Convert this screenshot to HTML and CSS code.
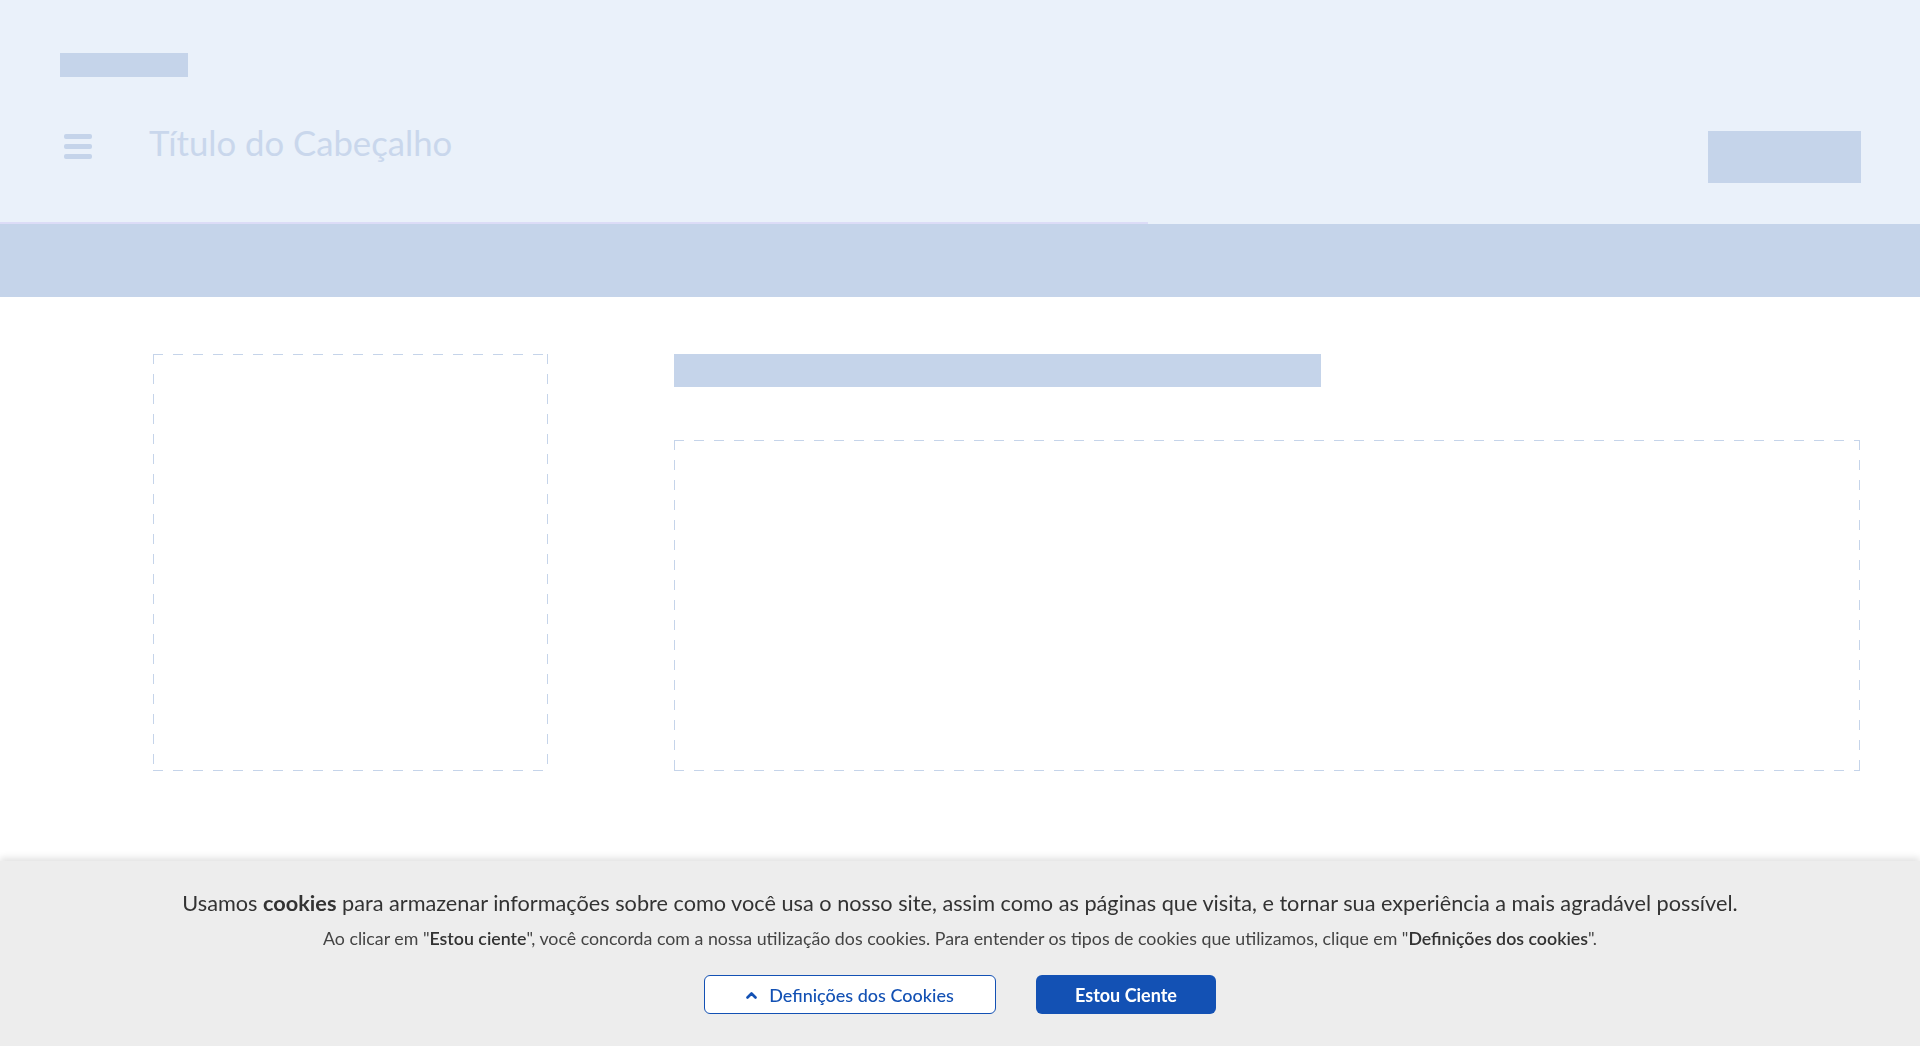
FILE: index.html
```html
<!DOCTYPE html>
<html lang="pt-BR">
<head>
<meta charset="utf-8">
<title>Título do Cabeçalho</title>
<link rel="stylesheet" href="styles.css">
</head>
<body>
<header class="header">
  <div class="header-inner">
    <div class="logo-ph"></div>
    <div class="header-row">
      <div class="burger"><span></span><span></span><span></span></div>
      <h1 class="header-title">Título do Cabeçalho</h1>
      <div class="header-action-ph"></div>
    </div>
  </div>
  <div class="header-progress"></div>
</header>
<div class="band"></div>
<main class="main">
  <div class="dash-box side-box"></div>
  <div class="content-col">
    <div class="title-ph"></div>
    <div class="dash-box content-box"></div>
  </div>
</main>
<div class="cookie-bar">
  <p class="cookie-main">Usamos <strong>cookies</strong> para armazenar informações sobre como você usa o nosso site, assim como as páginas que visita, e tornar sua experiência a mais agradável possível.</p>
  <p class="cookie-sub">Ao clicar em "<b>Estou ciente</b>", você concorda com a nossa utilização dos cookies. Para entender os tipos de cookies que utilizamos, clique em "<b>Definições dos cookies</b>".</p>
  <div class="cookie-actions">
    <button class="btn btn-outline"><svg class="caret" width="11" height="8" viewBox="0 0 11 8"><path d="M1.5 6.5 L5.5 2.5 L9.5 6.5" fill="none" stroke="#1351b4" stroke-width="2.6" stroke-linecap="round" stroke-linejoin="round"/></svg>Definições dos Cookies</button>
    <button class="btn btn-primary">Estou Ciente</button>
  </div>
</div>
</body>
</html>
```
FILE: styles.css
```css
html, body {
  margin: 0;
  padding: 0;
}
body {
  width: 1920px;
  height: 1046px;
  overflow: hidden;
  background: #ffffff;
  font-family: Lato, "Noto Sans", sans-serif;
}
.header {
  background: #eaf1fa;
  height: 224px;
  display: flex;
  flex-direction: column;
}
.header-inner {
  flex: 1;
  padding: 53px 59px 0 60px;
}
.logo-ph {
  width: 128px;
  height: 24px;
  background: #c5d4ea;
}
.header-row {
  display: flex;
  align-items: flex-start;
  margin-top: 54px;
}
.burger {
  width: 28px;
  margin: 3px 0 0 4px;
  display: flex;
  flex-direction: column;
  gap: 5px;
}
.burger span {
  display: block;
  height: 5px;
  border-radius: 2px;
  background: #c5d4ea;
}
.header-title {
  margin: -8px 0 0 57px;
  font-family: Lato, "Noto Sans", sans-serif;
  font-weight: 400;
  font-size: 34.7px;
  line-height: 40px;
  color: #c9d7ec;
  letter-spacing: 0;
}
.header-action-ph {
  margin-left: auto;
  width: 153px;
  height: 52px;
  background: #c5d4ea;
}
.header-progress {
  width: 1148px;
  height: 2px;
  background: #dcdcf7;
}
.band {
  height: 73px;
  background: #c5d4ea;
}
.main {
  display: flex;
  align-items: flex-start;
  padding: 57px 0 0 153px;
}
.dash-box {
  box-sizing: border-box;
  background-image:
    repeating-linear-gradient(90deg, #c5d4ea 0 10px, transparent 10px 20px),
    repeating-linear-gradient(90deg, #c5d4ea 0 10px, transparent 10px 20px),
    repeating-linear-gradient(180deg, #c5d4ea 0 10px, transparent 10px 20px),
    repeating-linear-gradient(180deg, #c5d4ea 0 10px, transparent 10px 20px);
  background-size: 100% 1px, 100% 1px, 1px 100%, 1px 100%;
  background-position: left top, left bottom, left top, right top;
  background-repeat: no-repeat;
}
.side-box {
  width: 395px;
  height: 417px;
}
.content-col {
  margin-left: 126px;
  width: 1186px;
  display: flex;
  flex-direction: column;
  gap: 53px;
}
.title-ph {
  width: 647px;
  height: 33px;
  background: #c5d4ea;
}
.content-box {
  height: 331px;
}
.cookie-bar {
  position: fixed;
  left: 0;
  right: 0;
  bottom: 0;
  height: 185px;
  box-sizing: border-box;
  background: #ededed;
  box-shadow: 0 -3px 7px rgba(0, 0, 0, 0.12);
  padding-top: 27px;
  text-align: center;
  color: #333333;
}
.cookie-main {
  margin: 0;
  font-size: 21.7px;
  line-height: 30px;
  font-weight: 400;
}
.cookie-main strong {
  font-weight: 700;
}
.cookie-sub {
  margin: 8px 0 0;
  font-size: 17.8px;
  line-height: 24px;
  color: #444444;
}
.cookie-sub b {
  font-weight: 600;
  color: #333333;
}
.cookie-actions {
  display: flex;
  justify-content: center;
  gap: 40px;
  margin-top: 25px;
}
.btn {
  box-sizing: border-box;
  height: 39px;
  border-radius: 6px;
  font-family: Lato, "Noto Sans", sans-serif;
  font-size: 18px;
  display: flex;
  align-items: center;
  justify-content: center;
  cursor: pointer;
}
.btn-outline {
  width: 292px;
  background: #ffffff;
  border: 1px solid #1351b4;
  color: #1351b4;
  font-weight: 500;
}
.caret {
  margin-right: 12px;
}
.btn-primary {
  width: 180px;
  background: #1351b4;
  border: none;
  color: #ffffff;
  font-weight: 700;
}
```
